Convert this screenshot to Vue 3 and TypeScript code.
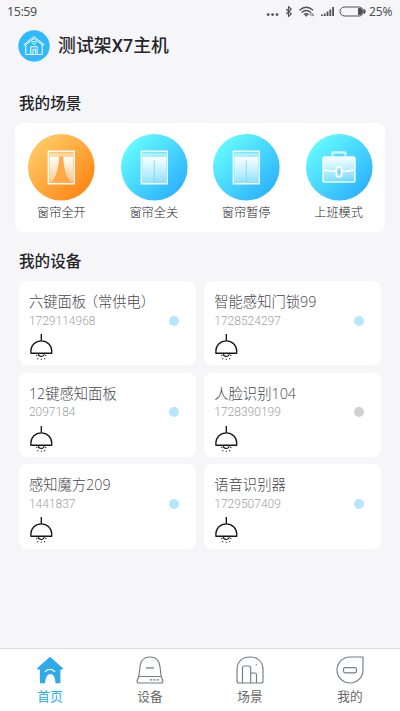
<script setup lang="ts">
interface Scene { name: string; kind: 'open' | 'closed' | 'bag' }
interface Device { name: string; note?: string; id: string; online: boolean }
interface Tab { name: string; icon: 'home' | 'device' | 'scene' | 'mine' }

const scenes: Scene[] = [
  { name: '窗帘全开', kind: 'open' },
  { name: '窗帘全关', kind: 'closed' },
  { name: '窗帘暂停', kind: 'closed' },
  { name: '上班模式', kind: 'bag' },
]
const devices: Device[] = [
  { name: '六键面板', note: '（常供电）', id: '1729114968', online: true },
  { name: '智能感知门锁99', id: '1728524297', online: true },
  { name: '12键感知面板', id: '2097184', online: true },
  { name: '人脸识别104', id: '1728390199', online: false },
  { name: '感知魔方209', id: '1441837', online: true },
  { name: '语音识别器', id: '1729507409', online: true },
]
const tabs: Tab[] = [
  { name: '首页', icon: 'home' },
  { name: '设备', icon: 'device' },
  { name: '场景', icon: 'scene' },
  { name: '我的', icon: 'mine' },
]
</script>

<template>
  <div class="screen">
    <header class="status">
      <span class="clock">15:59</span>
      <svg class="signals" width="102" height="14" viewBox="0 0 102 14" fill="none" stroke="#505052">
        <g fill="#505052" stroke="none">
          <circle cx="2.2" cy="9.6" r="1.4" /><circle cx="6.6" cy="9.6" r="1.4" /><circle cx="11" cy="9.6" r="1.4" />
          <path d="M55 11V9.5h1.8V11zM57.8 11V8.5h1.8V11zM60.6 11V6.5h1.8V11zM63.4 11V4.5h1.8V11zM66.2 11V2h1.8v9z" />
        </g>
        <path d="M20.3 4l5 5-2.8 2.3V1.7L25.3 4l-5 5" stroke-width="1.1" />
        <path d="M33.5 5.2q6.8-6 13.6 0M35.7 7.5q4.6-4.1 9.2 0M37.9 9.7q2.4-2 4.8 0" stroke-width="1.4" />
        <path d="M40.3 9.5l1.4 1.1-1.4 1.2-1.4-1.2z" fill="#505052" stroke="none" />
        <path d="M45 11V8m-1.3 1.2L45 7.8M46.8 8v3m1.2-1.2L46.8 11.2" stroke-width=".7" />
        <rect x="74" y="2" width="23.5" height="9" rx="4.5" />
        <path d="M92.5 3.5h1.5q2.5 0 2.5 3t-2.5 3h-1.5zM98.5 4.5q1.5 2 0 4z" fill="#505052" />
      </svg>
      <span class="percent">25%</span>
    </header>

    <div class="host">
      <svg width="32" height="32" viewBox="0 0 32 32" fill="none" stroke="#fff" stroke-width="1" stroke-linejoin="round">
        <circle cx="16" cy="16" r="15.7" fill="#30b9fc" stroke="none" />
        <path d="M6 14.5L16 6.7l10 7.8-.8.9L16 8.5l-9.2 6.9zM7.8 15v9.5h16.4V15M12.8 24.5v-7.8h6.4v7.8M15 24.5v-5.2h2.5v5.2" />
        <path d="M16.1 14.7l-2-2.1q.2-2 2-.8 1.8-1.2 2 .8z" stroke-width=".9" />
      </svg>
      <h1>测试架X7主机</h1>
    </div>

    <section class="scene-section">
      <h2>我的场景</h2>
      <div class="scenes">
        <div v-for="scene in scenes" :key="scene.name" class="scene">
          <svg width="68" height="68" viewBox="0 0 68 68" fill="none">
            <defs>
              <linearGradient :id="'bg-' + scene.name" x1=".12" y1=".12" x2=".88" y2=".88">
                <stop offset="0" :stop-color="scene.kind === 'open' ? '#ffcb67' : '#65fbff'" />
                <stop offset="1" :stop-color="scene.kind === 'open' ? '#ff8614' : '#2cb1ff'" />
              </linearGradient>
              <linearGradient :id="'sheen-' + scene.name" x1="0" y1="0" x2="0" y2="1">
                <stop offset="0" stop-color="#fff" stop-opacity=".96" />
                <stop offset="1" stop-color="#fff" stop-opacity=".27" />
              </linearGradient>
            </defs>
            <circle cx="34.3" cy="34.2" r="33.3" :fill="`url(#bg-${scene.name})`" />
            <template v-if="scene.kind !== 'bag'">
              <path d="M21.3 18.3h26v32.5h-26z" fill="#fff" fill-opacity=".22" stroke="#fff" stroke-opacity=".95" stroke-width="1.4" />
              <path d="M22.3 20.5h24v2h-24z" fill="#fff" fill-opacity=".5" />
              <template v-if="scene.kind === 'open'">
                <path d="M22.5 23.5H32V28Q30.5 43 24.8 48.7h-2.3zM46 23.5h-9.7V28q1.5 15 7.2 20.7H46z" :fill="`url(#sheen-${scene.name})`" />
                <path d="M32 24.3V28Q30.5 43 24.8 48.7h18.7Q37.8 43 36.3 28v-3.7z" fill="#ffa33c" fill-opacity=".75" />
              </template>
              <template v-else>
                <path d="M22.3 23.5h24V50h-24z" :fill="`url(#sheen-${scene.name})`" />
                <path d="M34.3 27v22" stroke="#70cff5" stroke-width=".9" stroke-opacity=".75" />
              </template>
            </template>
            <template v-else>
              <path d="M27.5 22.7v-2.2q0-1 1-1h11q1 0 1 1v2.2" stroke="#fff" stroke-opacity=".72" stroke-width="2.6" />
              <rect x="18" y="24" width="32" height="25" rx="1.5" :fill="`url(#sheen-${scene.name})`" stroke="#fff" stroke-opacity=".9" stroke-width="1.5" />
              <path d="M18 37q16 3 32 0" stroke="#fff" stroke-width="1.4" />
              <rect x="31.4" y="34" width="5.3" height="10" rx="2" fill="#a8e6ff" stroke="#fff" stroke-width="1.5" />
              <path d="M34 37v4" stroke="#38c7ff" stroke-width="1" />
            </template>
          </svg>
          <span>{{ scene.name }}</span>
        </div>
      </div>
    </section>

    <section class="device-section">
      <h2>我的设备</h2>
      <div class="devices">
        <article v-for="device in devices" :key="device.id" class="device">
          <h3>{{ device.name }}<span v-if="device.note" class="note">{{ device.note }}</span></h3>
          <div class="meta">
            <span>{{ device.id }}</span>
            <i :class="{ offline: !device.online }" />
          </div>
          <svg width="25" height="28" viewBox="0 0 25 28" fill="none" stroke="#171719" stroke-width="1.35">
            <path d="M12.3 0v6.8M1.9 19.2v-2.4a10.4 10 0 0 1 20.8 0v2.4z" stroke-linejoin="round" />
            <path d="M9.3 19.5a3 3 0 0 0 6 0" stroke-width="1.1" />
            <path d="M7.3 21.8l1-.7M17.3 21.8l-1-.7M8.5 25.2l.7-.9M16.1 25.2l-.7-.9M12.3 24.7v1.1" stroke-width="1.1" />
          </svg>
        </article>
      </div>
    </section>

    <nav class="tabs">
      <div v-for="tab in tabs" :key="tab.icon" class="tab" :class="{ active: tab.icon === 'home' }">
        <svg width="28" height="28" viewBox="0 0 28 28" fill="none" stroke="#777b89" stroke-width="1.15" stroke-linejoin="round">
          <template v-if="tab.icon === 'home'">
            <path d="M14 .7l13.2 11.8-.8 1.1h-2v13.7h-4.8q-.6-9.3-5.2-9.3t-5.4 9.3H3.9V13.6H1.6l-.8-1.1z" fill="#30a9eb" stroke="none" />
            <path d="M9.2 15.6q4.8-4.4 9.6 0" stroke="#fff" stroke-width="1.1" stroke-linecap="round" />
          </template>
          <template v-else-if="tab.icon === 'device'">
            <path d="M2.8 20.5L4.1 10Q5.3 1 14 1t9.9 9l1.3 10.5M2.8 20.5h22.4l1.6 4q.5 2.5-1.8 2.5H3Q.7 27 1.2 24.5z" />
            <path d="M10 11.8h8M14 23.8h2.4M17.5 23.8h2.2M20.8 23.8H23" />
          </template>
          <template v-else-if="tab.icon === 'scene'">
            <path d="M3 27q-2 0-2-2V14C1 5.5 6.2 1 14 1s13 4.5 13 13v11q0 2-2 2zM6.5 27V12q0-2 2-2h4.2q2 0 2 2v15M14.7 17h3.8q2 0 2 2v8" />
            <circle cx="20.3" cy="8.8" r=".7" fill="#777b89" stroke="none" />
          </template>
          <template v-else>
            <path d="M14 1h13v13A13 13 0 1 1 14 1z" />
            <rect x="7.5" y="11.6" width="13" height="5.2" rx="1.7" />
          </template>
        </svg>
        <span>{{ tab.name }}</span>
      </div>
    </nav>
  </div>
</template>

<style>
body { background: #f6f6f9; }
</style>

<style scoped>
* { box-sizing: border-box; }
.screen { width: 400px; height: 711px; display: flex; flex-direction: column; background: #f6f6f9; color: #252529; font-family: "Noto Sans CJK SC", sans-serif; overflow: hidden; }
h1, h2, h3 { margin: 0; }
.status { display: flex; align-items: center; height: 24px; padding: 0 7px; color: #505052; font: 12.5px/24px "Noto Sans", sans-serif; }
.clock { flex: 1; letter-spacing: -.45px; }
.percent { width: 24px; margin-left: 1px; font-size: 12px; letter-spacing: -.1px; white-space: nowrap; }
.host { display: flex; align-items: center; gap: 8px; height: 44px; padding-left: 18px; }
h1 { font-family: Roboto, "Noto Sans CJK SC", sans-serif; font-size: 17.8px; line-height: 28px; font-weight: 500; letter-spacing: .1px; }
h2 { height: 24px; padding-left: 19px; font-size: 15.6px; line-height: 24px; font-weight: 500; }
.scene-section { padding-top: 22px; }
.scenes { display: grid; grid-template-columns: repeat(4, 92.4px); justify-content: center; height: 109px; margin: 9px 15px 0; padding-top: 10px; background: #fff; border-radius: 8px; }
.scene { display: flex; flex-direction: column; align-items: center; font-size: 12.2px; line-height: 22px; color: #242428; font-weight: 300; }
.device-section { padding-top: 16px; }
.devices { display: grid; grid-template-columns: 177.6px 177.6px; grid-auto-rows: 84.2px; gap: 7.5px 7.8px; padding: 9px 0 0 18.5px; }
.device { background: #fff; border-radius: 8px; padding: 11px 17.5px 0 10.4px; }
h3 { font-family: "Open Sans", "Noto Sans CJK SC", sans-serif; font-size: 14.3px; line-height: 20px; height: 19px; font-weight: 300; color: #47474c; white-space: nowrap; }
.note { margin-left: -2.4px; }
.meta { display: flex; justify-content: space-between; align-items: center; height: 19px; font: 300 12px/19px Roboto, sans-serif; color: #a2a2a4; }
.meta span { padding-top: 1px; }
.meta i { width: 10px; height: 10px; border-radius: 50%; background: #b6e6ff; }
.meta i.offline { background: #d0d1d2; }
.device svg { display: block; margin-top: 4px; }
.tabs { display: grid; grid-template-columns: repeat(4, 1fr); height: 63px; margin-top: auto; padding-top: 7px; background: #fff; border-top: 1px solid #dedee0; }
.tab { display: flex; flex-direction: column; align-items: center; font-size: 12.7px; line-height: 23px; color: #68686c; }
.tab.active { color: #20adf8; }
</style>
